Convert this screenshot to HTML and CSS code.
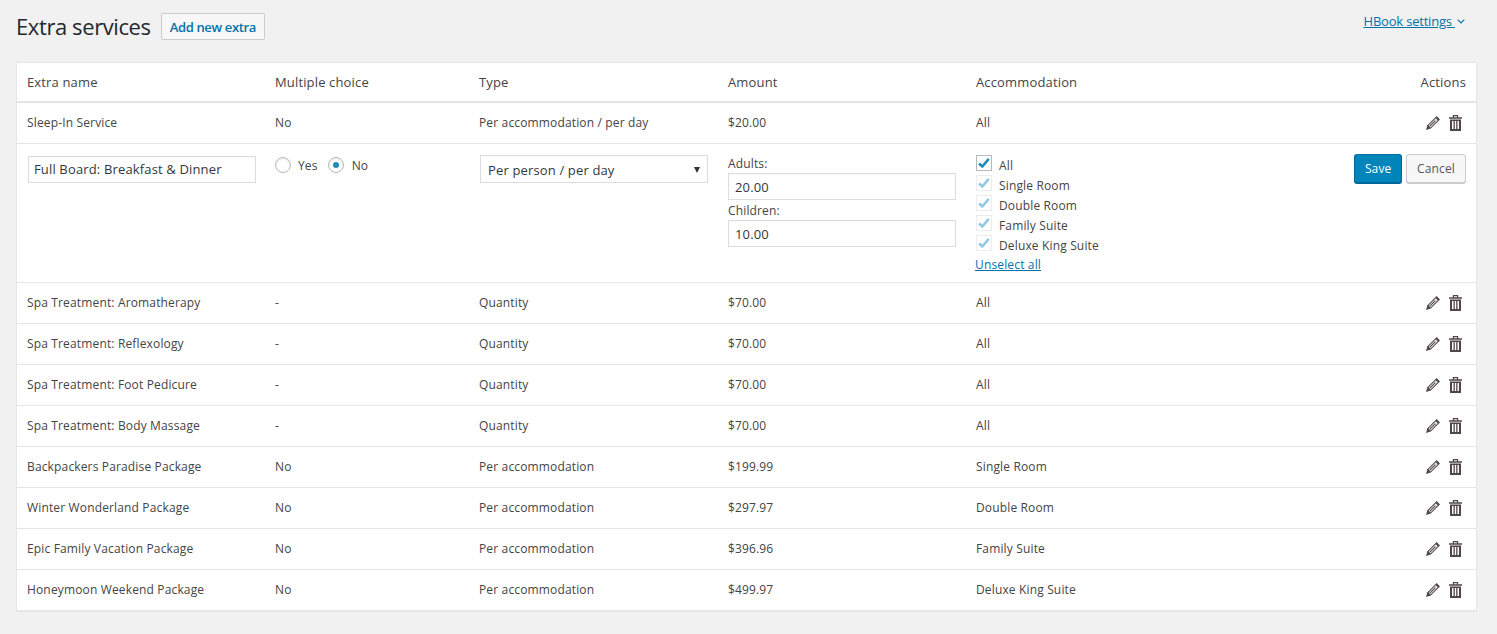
FILE: index.html
```html
<!DOCTYPE html>
<html lang="en">
<head>
<meta charset="utf-8">
<title>Extra services</title>
<link rel="stylesheet" href="styles.css">
</head>
<body>
<svg class="sprites" width="0" height="0" aria-hidden="true">
  <symbol id="pencil" viewBox="0 0 14 14">
    <path d="M10.600 0 14 3.400 4.800 12.600 0 14 1.400 9.200Z" fill="#50464a"/>
    <path d="M9.800 2.300 11.700 4.200 4.500 11.400 2.600 9.500Z" fill="#e8e8e8"/>
    <path d="M9 4.300 9.700 5 4.200 10.500 3.500 9.800Z" fill="#50464a"/>
  </symbol>
  <symbol id="trash" viewBox="0 0 13 16">
    <path d="M0 2.200H13V3.800H0ZM3.800 2.200V0H9.200V2.200H8V1.200H5V2.200Z" fill="#50464a"/>
    <path d="M1 4.500H12V16H1ZM3 6V14H4.500V6ZM5.800 6V14H7.200V6ZM8.500 6V14H10V6Z" fill="#50464a" fill-rule="evenodd"/>
  </symbol>
</svg>
<header class="top">
  <h1 class="title">Extra services</h1>
  <a class="add-btn">Add new extra</a>
  <a class="settings">HBook settings <svg class="chev" viewBox="0 0 8 5" width="8" height="5"><path d="M.7.7 4 4 7.300.7" fill="none" stroke="#0073aa" stroke-width="1.100"/></svg></a>
</header>
<main class="card">
<table class="extras">
  <colgroup><col class="c1"><col class="c2"><col class="c3"><col class="c4"><col class="c5"><col class="c6"></colgroup>
  <thead><tr><th>Extra name</th><th>Multiple choice</th><th>Type</th><th>Amount</th><th>Accommodation</th><th class="right">Actions</th></tr></thead>
  <tbody>
    <tr><td>Sleep-In Service</td><td>No</td><td>Per accommodation / per day</td><td>$20.00</td><td>All</td><td class="right"><div class="acts"><svg class="ic-p"><use href="#pencil"/></svg><svg class="ic-t"><use href="#trash"/></svg></div></td></tr>
    <tr class="edit">
      <td><div class="field name-field">Full Board: Breakfast &amp; Dinner</div></td>
      <td><div class="radios"><span class="radio"></span><span class="rlabel">Yes</span><span class="radio on"></span><span class="rlabel">No</span></div></td>
      <td><div class="field select">Per person / per day<span class="caret"></span></div></td>
      <td class="amounts"><div class="lab">Adults:</div><div class="field amt">20.00</div><div class="lab">Children:</div><div class="field amt">10.00</div></td>
      <td>
        <div class="checks">
          <div class="chk"><span class="box main"><svg viewBox="0 0 16 16"><path d="M3 8.500 6.300 11.500 12.800 3.800" fill="none" stroke="#1e8cbe" stroke-width="2.600"/></svg></span>All</div>
          <div class="chk"><span class="box"><svg viewBox="0 0 16 16"><path d="M3 8.500 6.300 11.500 12.800 3.800" fill="none" stroke="#8fcae4" stroke-width="2.600"/></svg></span>Single Room</div>
          <div class="chk"><span class="box"><svg viewBox="0 0 16 16"><path d="M3 8.500 6.300 11.500 12.800 3.800" fill="none" stroke="#8fcae4" stroke-width="2.600"/></svg></span>Double Room</div>
          <div class="chk"><span class="box"><svg viewBox="0 0 16 16"><path d="M3 8.500 6.300 11.500 12.800 3.800" fill="none" stroke="#8fcae4" stroke-width="2.600"/></svg></span>Family Suite</div>
          <div class="chk"><span class="box"><svg viewBox="0 0 16 16"><path d="M3 8.500 6.300 11.500 12.800 3.800" fill="none" stroke="#8fcae4" stroke-width="2.600"/></svg></span>Deluxe King Suite</div>
          <a class="unselect">Unselect all</a>
        </div>
      </td>
      <td class="right"><div class="btns"><a class="btn primary">Save</a><a class="btn">Cancel</a></div></td>
    </tr>
    <tr><td>Spa Treatment: Aromatherapy</td><td>-</td><td>Quantity</td><td>$70.00</td><td>All</td><td class="right"><div class="acts"><svg class="ic-p"><use href="#pencil"/></svg><svg class="ic-t"><use href="#trash"/></svg></div></td></tr>
    <tr><td>Spa Treatment: Reflexology</td><td>-</td><td>Quantity</td><td>$70.00</td><td>All</td><td class="right"><div class="acts"><svg class="ic-p"><use href="#pencil"/></svg><svg class="ic-t"><use href="#trash"/></svg></div></td></tr>
    <tr><td>Spa Treatment: Foot Pedicure</td><td>-</td><td>Quantity</td><td>$70.00</td><td>All</td><td class="right"><div class="acts"><svg class="ic-p"><use href="#pencil"/></svg><svg class="ic-t"><use href="#trash"/></svg></div></td></tr>
    <tr><td>Spa Treatment: Body Massage</td><td>-</td><td>Quantity</td><td>$70.00</td><td>All</td><td class="right"><div class="acts"><svg class="ic-p"><use href="#pencil"/></svg><svg class="ic-t"><use href="#trash"/></svg></div></td></tr>
    <tr><td>Backpackers Paradise Package</td><td>No</td><td>Per accommodation</td><td>$199.99</td><td>Single Room</td><td class="right"><div class="acts"><svg class="ic-p"><use href="#pencil"/></svg><svg class="ic-t"><use href="#trash"/></svg></div></td></tr>
    <tr><td>Winter Wonderland Package</td><td>No</td><td>Per accommodation</td><td>$297.97</td><td>Double Room</td><td class="right"><div class="acts"><svg class="ic-p"><use href="#pencil"/></svg><svg class="ic-t"><use href="#trash"/></svg></div></td></tr>
    <tr><td>Epic Family Vacation Package</td><td>No</td><td>Per accommodation</td><td>$396.96</td><td>Family Suite</td><td class="right"><div class="acts"><svg class="ic-p"><use href="#pencil"/></svg><svg class="ic-t"><use href="#trash"/></svg></div></td></tr>
    <tr><td>Honeymoon Weekend Package</td><td>No</td><td>Per accommodation</td><td>$499.97</td><td>Deluxe King Suite</td><td class="right"><div class="acts"><svg class="ic-p"><use href="#pencil"/></svg><svg class="ic-t"><use href="#trash"/></svg></div></td></tr>
  </tbody>
</table>
</main>
</body>
</html>
```
FILE: styles.css
```css
* { box-sizing: border-box; }
html, body { margin: 0; padding: 0; }
body {
  background: #f1f1f1;
  color: #444;
  font: 13px/19px "Open Sans", sans-serif;
  height: 634px;
  overflow: hidden;
}
.sprites { position: absolute; }
.top {
  display: flex;
  align-items: flex-start;
  height: 62px;
  padding: 13px 32px 0 16px;
}
.title {
  margin: -1px 0 0;
  font-size: 22px;
  font-weight: 400;
  line-height: 29px;
  letter-spacing: -.4px;
  color: #23282d;
}
.add-btn {
  margin-left: 10px;
  height: 27px;
  padding: 0 8px;
  border: 1px solid #ccc;
  border-radius: 2px;
  background: #f7f7f7;
  color: #0073aa;
  font-size: 13px;
  font-weight: 600;
  line-height: 27px;
  letter-spacing: -.35px;
}
.settings {
  margin-left: auto;
  margin-top: -1px;
  color: #0073aa;
  text-decoration: underline;
  line-height: 18px;
  letter-spacing: -.2px;
}
.chev { vertical-align: 2px; margin-left: 2px; }
.card {
  margin: 0 20px 0 16px;
  background: #fff;
  border: 1px solid #e5e5e5;
  box-shadow: 0 1px 1px rgba(0,0,0,.04);
}
.extras {
  width: 100%;
  border-collapse: collapse;
  table-layout: fixed;
}
.c1 { width: 248px; }
.c2 { width: 204px; }
.c3 { width: 248px; }
.c4 { width: 248px; }
.extras th {
  height: 39px;
  padding: 0 10px;
  font-size: 13px;
  font-weight: 400;
  text-align: left;
  vertical-align: middle;
  border-bottom: 2px solid #e5e5e5;
  letter-spacing: .15px;
}
.extras td {
  height: 41px;
  padding: 0 10px;
  font-size: 12px;
  letter-spacing: .15px;
  vertical-align: middle;
  border-top: 1px solid #e5e5e5;
}
.extras tbody tr:first-child td { border-top: 0; height: 41px; }
.extras th:nth-child(n+4), .extras td:nth-child(n+4) { padding-left: 11px; }
.extras th.right, .extras td.right { text-align: right; }
.extras .edit td {
  height: 139px;
  vertical-align: top;
  padding-top: 10px;
  font-size: 13px;
}
.acts {
  display: flex;
  justify-content: flex-end;
  align-items: center;
  gap: 9px;
  padding-right: 4px;
}
.ic-p { width: 14px; height: 14px; }
.ic-t { width: 13px; height: 16px; }
.field {
  border: 1px solid #ddd;
  background: #fff;
  color: #32373c;
  padding: 0 5px;
  height: 27px;
  line-height: 25px;
  font-size: 13px;
  box-shadow: inset 0 1px 2px rgba(0,0,0,.03);
}
.name-field { width: 228px; margin: 2px 0 0 1px; }
.radios {
  display: flex;
  align-items: center;
  height: 19px;
  margin-top: 2px;
}
.radio {
  width: 16px;
  height: 16px;
  border-radius: 50%;
  border: 1px solid #b4b9be;
  background: #fff;
  display: block;
  position: relative;
  box-shadow: inset 0 1px 2px rgba(0,0,0,.1);
}
.radio.on::after {
  content: "";
  position: absolute;
  left: 4px;
  top: 4px;
  width: 6px;
  height: 6px;
  border-radius: 50%;
  background: #1e8cbe;
}
.rlabel { margin: 0 10px 0 7px; font-size: 12px; }
.rlabel:last-child { margin-left: 8px; }
.select { width: 228px; height: 28px; margin: 1px 0 0 1px; position: relative; line-height: 29px; padding-left: 7px; }
.caret {
  position: absolute;
  right: 7px;
  top: 11px;
  border-left: 3.500px solid transparent;
  border-right: 3.500px solid transparent;
  border-top: 6px solid #333;
}
.lab { font-size: 12px; line-height: 19px; }
.amt { width: 228px; height: 27px; margin: 0 0 1px; padding-left: 6px; line-height: 26px; }
.checks { font-size: 12px; }
.chk {
  display: flex;
  align-items: flex-start;
  height: 20px;
  padding-top: 2px;
}
.box {
  width: 16px;
  height: 16px;
  margin: -1px 7px 0 0;
  border: 1px solid #ececec;
  display: block;
  background: #fff;
}
.box svg { display: block; width: 16px; height: 16px; margin: -1px; }
.box.main { border-color: #b4b9be; }
.unselect {
  display: block;
  margin: 3px 0 0 -1px;
  line-height: 16px;
  color: #0073aa;
  text-decoration: underline;
}
.btns { display: flex; justify-content: flex-end; gap: 4px; }
.btn {
  display: block;
  height: 29px;
  line-height: 27px;
  padding: 0 10px;
  border: 1px solid #ccc;
  border-radius: 3px;
  background: #f7f7f7;
  color: #555;
  font-size: 12px;
  box-shadow: 0 1px 0 #ccc;
}
.btn.primary {
  padding: 0 9.500px;
  background: #0085ba;
  border-color: #0073aa #006799 #006799;
  color: #fff;
  box-shadow: 0 1px 0 #006799;
}
```
